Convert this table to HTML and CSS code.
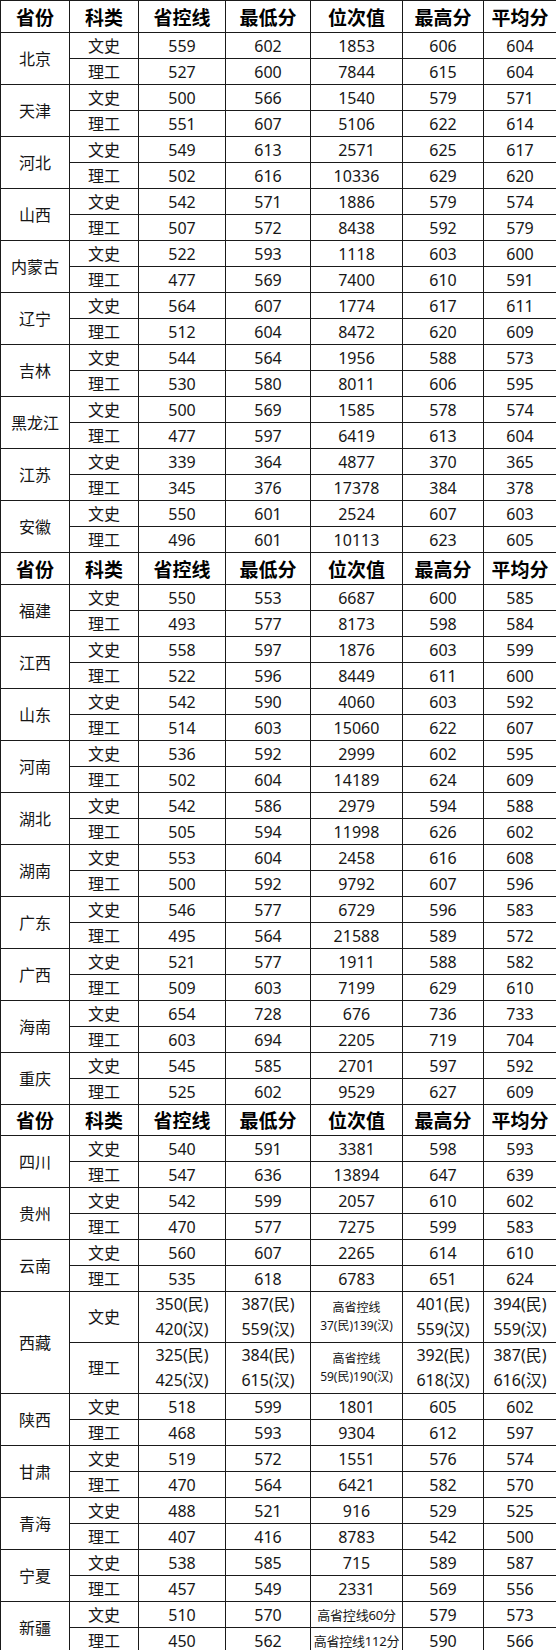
FILE: index.html
```html
<!DOCTYPE html>
<html lang="zh-CN">
<head>
<meta charset="utf-8">
<title>各省录取分数</title>
<link rel="stylesheet" href="styles.css">
</head>
<body>
<table class="scores">
<colgroup>
<col class="c1"><col class="c2"><col class="c3"><col class="c4"><col class="c5"><col class="c6"><col class="c7">
</colgroup>
<tbody>
<tr class="hd"><td>省份</td><td>科类</td><td>省控线</td><td>最低分</td><td>位次值</td><td>最高分</td><td>平均分</td></tr>
<tr><td rowspan="2">北京</td><td>文史</td><td>559</td><td>602</td><td>1853</td><td>606</td><td>604</td></tr>
<tr><td>理工</td><td>527</td><td>600</td><td>7844</td><td>615</td><td>604</td></tr>
<tr><td rowspan="2">天津</td><td>文史</td><td>500</td><td>566</td><td>1540</td><td>579</td><td>571</td></tr>
<tr><td>理工</td><td>551</td><td>607</td><td>5106</td><td>622</td><td>614</td></tr>
<tr><td rowspan="2">河北</td><td>文史</td><td>549</td><td>613</td><td>2571</td><td>625</td><td>617</td></tr>
<tr><td>理工</td><td>502</td><td>616</td><td>10336</td><td>629</td><td>620</td></tr>
<tr><td rowspan="2">山西</td><td>文史</td><td>542</td><td>571</td><td>1886</td><td>579</td><td>574</td></tr>
<tr><td>理工</td><td>507</td><td>572</td><td>8438</td><td>592</td><td>579</td></tr>
<tr><td rowspan="2">内蒙古</td><td>文史</td><td>522</td><td>593</td><td>1118</td><td>603</td><td>600</td></tr>
<tr><td>理工</td><td>477</td><td>569</td><td>7400</td><td>610</td><td>591</td></tr>
<tr><td rowspan="2">辽宁</td><td>文史</td><td>564</td><td>607</td><td>1774</td><td>617</td><td>611</td></tr>
<tr><td>理工</td><td>512</td><td>604</td><td>8472</td><td>620</td><td>609</td></tr>
<tr><td rowspan="2">吉林</td><td>文史</td><td>544</td><td>564</td><td>1956</td><td>588</td><td>573</td></tr>
<tr><td>理工</td><td>530</td><td>580</td><td>8011</td><td>606</td><td>595</td></tr>
<tr><td rowspan="2">黑龙江</td><td>文史</td><td>500</td><td>569</td><td>1585</td><td>578</td><td>574</td></tr>
<tr><td>理工</td><td>477</td><td>597</td><td>6419</td><td>613</td><td>604</td></tr>
<tr><td rowspan="2">江苏</td><td>文史</td><td>339</td><td>364</td><td>4877</td><td>370</td><td>365</td></tr>
<tr><td>理工</td><td>345</td><td>376</td><td>17378</td><td>384</td><td>378</td></tr>
<tr><td rowspan="2">安徽</td><td>文史</td><td>550</td><td>601</td><td>2524</td><td>607</td><td>603</td></tr>
<tr><td>理工</td><td>496</td><td>601</td><td>10113</td><td>623</td><td>605</td></tr>

<tr class="hd"><td>省份</td><td>科类</td><td>省控线</td><td>最低分</td><td>位次值</td><td>最高分</td><td>平均分</td></tr>
<tr><td rowspan="2">福建</td><td>文史</td><td>550</td><td>553</td><td>6687</td><td>600</td><td>585</td></tr>
<tr><td>理工</td><td>493</td><td>577</td><td>8173</td><td>598</td><td>584</td></tr>
<tr><td rowspan="2">江西</td><td>文史</td><td>558</td><td>597</td><td>1876</td><td>603</td><td>599</td></tr>
<tr><td>理工</td><td>522</td><td>596</td><td>8449</td><td>611</td><td>600</td></tr>
<tr><td rowspan="2">山东</td><td>文史</td><td>542</td><td>590</td><td>4060</td><td>603</td><td>592</td></tr>
<tr><td>理工</td><td>514</td><td>603</td><td>15060</td><td>622</td><td>607</td></tr>
<tr><td rowspan="2">河南</td><td>文史</td><td>536</td><td>592</td><td>2999</td><td>602</td><td>595</td></tr>
<tr><td>理工</td><td>502</td><td>604</td><td>14189</td><td>624</td><td>609</td></tr>
<tr><td rowspan="2">湖北</td><td>文史</td><td>542</td><td>586</td><td>2979</td><td>594</td><td>588</td></tr>
<tr><td>理工</td><td>505</td><td>594</td><td>11998</td><td>626</td><td>602</td></tr>
<tr><td rowspan="2">湖南</td><td>文史</td><td>553</td><td>604</td><td>2458</td><td>616</td><td>608</td></tr>
<tr><td>理工</td><td>500</td><td>592</td><td>9792</td><td>607</td><td>596</td></tr>
<tr><td rowspan="2">广东</td><td>文史</td><td>546</td><td>577</td><td>6729</td><td>596</td><td>583</td></tr>
<tr><td>理工</td><td>495</td><td>564</td><td>21588</td><td>589</td><td>572</td></tr>
<tr><td rowspan="2">广西</td><td>文史</td><td>521</td><td>577</td><td>1911</td><td>588</td><td>582</td></tr>
<tr><td>理工</td><td>509</td><td>603</td><td>7199</td><td>629</td><td>610</td></tr>
<tr><td rowspan="2">海南</td><td>文史</td><td>654</td><td>728</td><td>676</td><td>736</td><td>733</td></tr>
<tr><td>理工</td><td>603</td><td>694</td><td>2205</td><td>719</td><td>704</td></tr>
<tr><td rowspan="2">重庆</td><td>文史</td><td>545</td><td>585</td><td>2701</td><td>597</td><td>592</td></tr>
<tr><td>理工</td><td>525</td><td>602</td><td>9529</td><td>627</td><td>609</td></tr>

<tr class="hd hd3"><td>省份</td><td>科类</td><td>省控线</td><td>最低分</td><td>位次值</td><td>最高分</td><td>平均分</td></tr>
<tr><td rowspan="2">四川</td><td>文史</td><td>540</td><td>591</td><td>3381</td><td>598</td><td>593</td></tr>
<tr><td>理工</td><td>547</td><td>636</td><td>13894</td><td>647</td><td>639</td></tr>
<tr><td rowspan="2">贵州</td><td>文史</td><td>542</td><td>599</td><td>2057</td><td>610</td><td>602</td></tr>
<tr><td>理工</td><td>470</td><td>577</td><td>7275</td><td>599</td><td>583</td></tr>
<tr><td rowspan="2">云南</td><td>文史</td><td>560</td><td>607</td><td>2265</td><td>614</td><td>610</td></tr>
<tr><td>理工</td><td>535</td><td>618</td><td>6783</td><td>651</td><td>624</td></tr>
<tr class="tall"><td rowspan="2">西藏</td><td>文史</td><td class="two">350(民)<br>420(汉)</td><td class="two">387(民)<br>559(汉)</td><td class="note">高省控线<br>37(民)139(汉)</td><td class="two">401(民)<br>559(汉)</td><td class="two">394(民)<br>559(汉)</td></tr>
<tr class="tall"><td>理工</td><td class="two">325(民)<br>425(汉)</td><td class="two">384(民)<br>615(汉)</td><td class="note">高省控线<br>59(民)190(汉)</td><td class="two">392(民)<br>618(汉)</td><td class="two">387(民)<br>616(汉)</td></tr>
<tr><td rowspan="2">陕西</td><td>文史</td><td>518</td><td>599</td><td>1801</td><td>605</td><td>602</td></tr>
<tr><td>理工</td><td>468</td><td>593</td><td>9304</td><td>612</td><td>597</td></tr>
<tr><td rowspan="2">甘肃</td><td>文史</td><td>519</td><td>572</td><td>1551</td><td>576</td><td>574</td></tr>
<tr><td>理工</td><td>470</td><td>564</td><td>6421</td><td>582</td><td>570</td></tr>
<tr><td rowspan="2">青海</td><td>文史</td><td>488</td><td>521</td><td>916</td><td>529</td><td>525</td></tr>
<tr><td>理工</td><td>407</td><td>416</td><td>8783</td><td>542</td><td>500</td></tr>
<tr><td rowspan="2">宁夏</td><td>文史</td><td>538</td><td>585</td><td>715</td><td>589</td><td>587</td></tr>
<tr><td>理工</td><td>457</td><td>549</td><td>2331</td><td>569</td><td>556</td></tr>
<tr><td rowspan="2">新疆</td><td>文史</td><td>510</td><td>570</td><td class="small">高省控线60分</td><td>579</td><td>573</td></tr>
<tr><td>理工</td><td>450</td><td>562</td><td class="small">高省控线112分</td><td>590</td><td>566</td></tr>
</tbody>
</table>
</body>
</html>
```

FILE: styles.css
```css
html, body {
  margin: 0;
  padding: 0;
  background: #ffffff;
}

.scores {
  border-collapse: collapse;
  table-layout: fixed;
  width: 556px;
  font-family: "Noto Sans", "Noto Sans CJK SC", sans-serif;
  font-size: 16px;
  color: #161616;
}

.c1 { width: 69px; }
.c2 { width: 69px; }
.c3 { width: 87px; }
.c4 { width: 85px; }
.c5 { width: 92px; }
.c6 { width: 81px; }
.c7 { width: 73px; }

.scores td {
  border: 1px solid #1a1a1a;
  padding: 0;
  height: 25px;
  line-height: 20px;
  text-align: center;
  vertical-align: middle;
  white-space: nowrap;
}

.scores .hd td {
  height: 31px;
  font-family: "Noto Sans CJK SC", sans-serif;
  font-size: 19px;
  font-weight: 700;
  color: #000;
}

.scores .hd3 td {
  height: 30px;
}

.scores .tall td {
  height: 48px;
}

.scores td.two {
  line-height: 25px;
}

.scores td.note {
  font-size: 12px;
  line-height: 18px;
}

.scores td.small {
  font-size: 13px;
  letter-spacing: -0.2px;
}
```
